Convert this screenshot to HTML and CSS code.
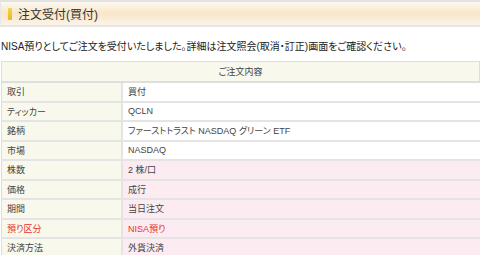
FILE: index.html
```html
<!DOCTYPE html>
<html lang="ja">
<head>
  <meta charset="UTF-8">
  <title>注文受付(買付)</title>
  <link rel="stylesheet" href="styles.css">
</head>
<body>
  <div class="page-title">
    <span class="marker"></span>
    <h1>注文受付(買付)</h1>
  </div>

  <p class="message">NISA預りとしてご注文を受付いたしました。詳細は注文照会(取消・訂正)画面をご確認ください。</p>

  <table class="order">
    <tr>
      <th colspan="2">ご注文内容</th>
    </tr>
    <tr>
      <td class="label">取引</td>
      <td>買付</td>
    </tr>
    <tr>
      <td class="label">ティッカー</td>
      <td>QCLN</td>
    </tr>
    <tr>
      <td class="label">銘柄</td>
      <td>ファーストトラスト NASDAQ グリーン ETF</td>
    </tr>
    <tr>
      <td class="label">市場</td>
      <td>NASDAQ</td>
    </tr>
    <tr class="input">
      <td class="label">株数</td>
      <td>2 株/口</td>
    </tr>
    <tr class="input">
      <td class="label">価格</td>
      <td>成行</td>
    </tr>
    <tr class="input">
      <td class="label">期間</td>
      <td>当日注文</td>
    </tr>
    <tr class="input alert">
      <td class="label">預り区分</td>
      <td>NISA預り</td>
    </tr>
    <tr class="input">
      <td class="label">決済方法</td>
      <td>外貨決済</td>
    </tr>
  </table>
</body>
</html>
```

FILE: styles.css
```css
body {
  margin: 0;
  font-family: "Liberation Sans", "Noto Sans CJK JP", sans-serif;
  font-feature-settings: "palt";
  color: #333;
  background-color: #fff;
}
.page-title {
  display: flex;
  align-items: center;
  height: 23px;
  border-top: 2px solid #e2e2e2;
  border-bottom: 2px solid #e6e6e6;
  border-left: 1px solid #e6e6e6;
  background: linear-gradient(to bottom, #fdf8ef 0%, #f8e6c9 50%, #fcf4e8 100%);
  padding-left: 7px;
}
.marker {
  width: 4px;
  height: 12px;
  margin-right: 6px;
  background: linear-gradient(to bottom, #f7d64a, #e8b81c);
  border-radius: 1px;
}
h1 {
  margin: 0;
  font-size: 12px;
  font-weight: normal;
  color: #333;
}
.message {
  margin: 13px 0 0 1px;
  font-size: 10px;
  color: #222;
  line-height: 14px;
}
.order {
  width: 479px;
  margin: 7px 0 0 1px;
  border-collapse: collapse;
  font-size: 9px;
  color: #444;
}
.order th {
  height: 17px;
  background-color: #f9f8ec;
  font-weight: normal;
  text-align: center;
  border: 1px solid #dedede;
  border-bottom-width: 2px;
}
.order td {
  height: 17.5px;
  padding: 0 0 0 5px;
  border-bottom: 2px solid #e4e4e4;
}
.order td.label {
  width: 114px;
  background-color: #f8f8ec;
  border-left: 1px solid #dedede;
  border-right: 2px solid #e4e4e4;
}
.order .input td {
  background-color: #fcecf1;
}
.order .input td.label {
  background-color: #f8f8ec;
}
.order .alert td {
  color: #e8322c;
}
```
